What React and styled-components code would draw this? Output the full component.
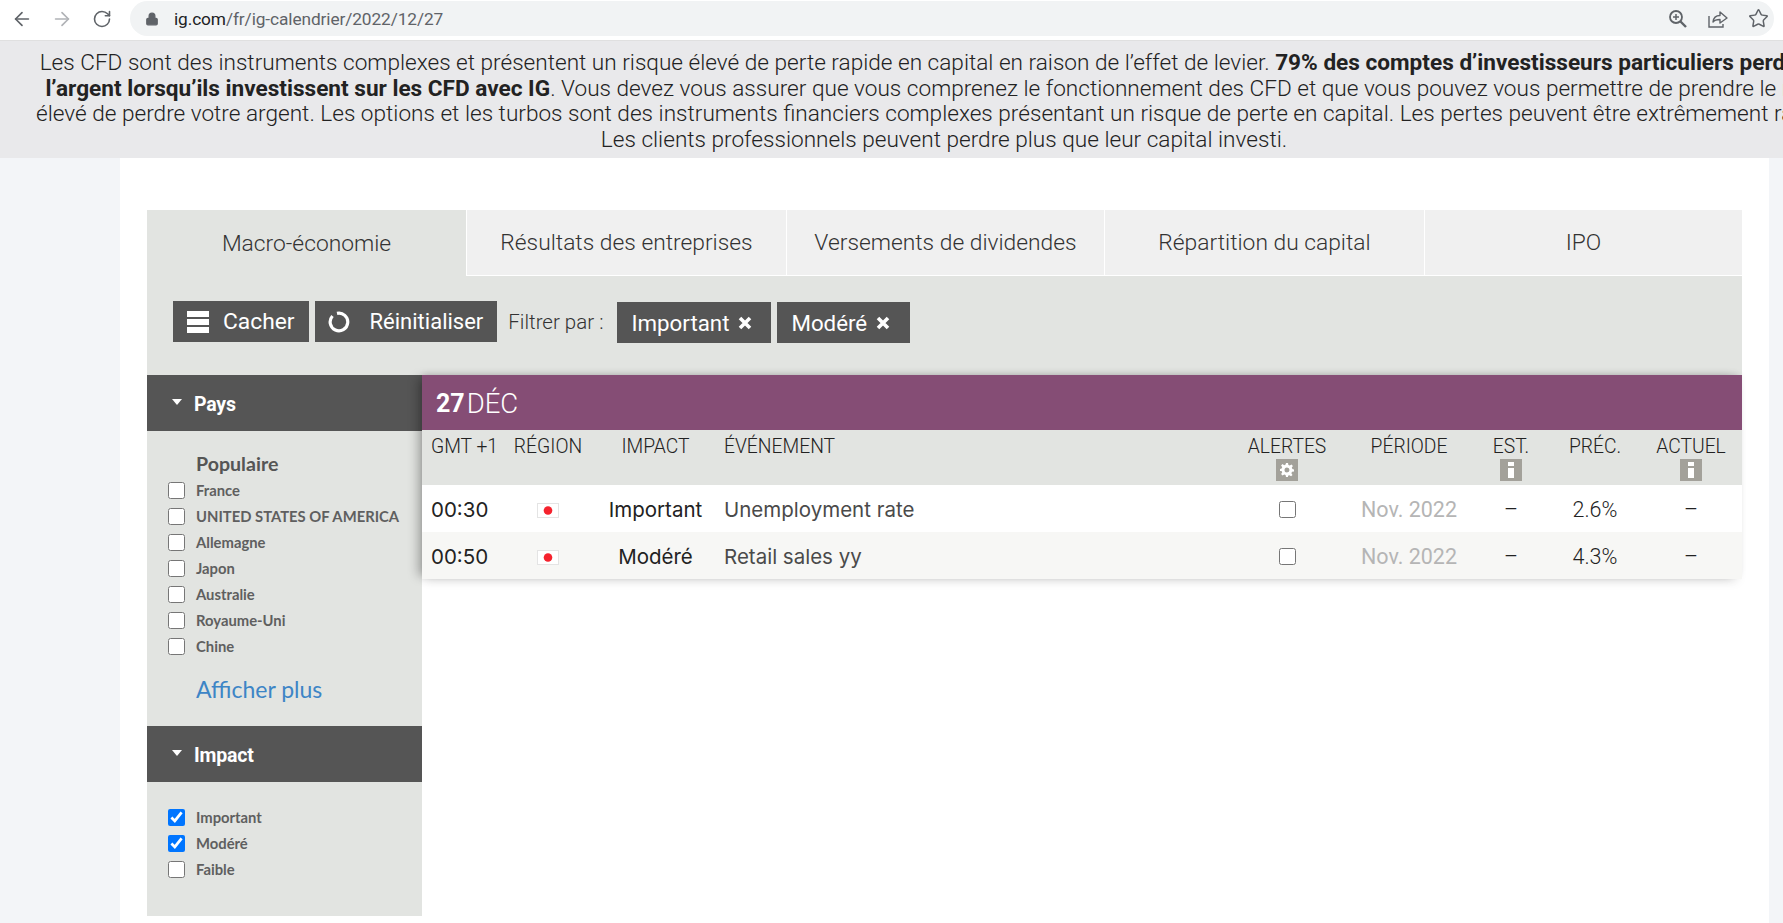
import React from "react";
import styled, { createGlobalStyle } from "styled-components";
import { ArrowLeft, ArrowRight, RotateCw, Lock, Star } from "lucide-react";

const Global = createGlobalStyle`
  html, body { margin: 0; padding: 0; background: #fff; overflow: hidden; }
  body { width: 1783px; height: 923px; font-family: Roboto, "Liberation Sans", sans-serif; }
  * { box-sizing: border-box; }
`;
const sans = `Roboto, "Liberation Sans", sans-serif`;
const round = `Lato, "Noto Sans", sans-serif`;
const geo = `Inter, "Noto Sans", sans-serif`;

const BrowserBar = styled.header`
  height: 41px; display: flex; align-items: flex-start; padding: 1px 9px 0 2px; background: #fff;
  border-bottom: 1px solid #e0e0e0;
`;
const NavButton = styled.span`
  width: 40px; height: 35px; display: flex; align-items: center; justify-content: center;
  color: ${p => (p.$muted ? "#b0b2b6" : "#5f6368")};
`;
const Omnibox = styled.div`
  flex: 1; margin-left: 8px; height: 35px; border-radius: 18px; background: #f1f3f4;
  display: flex; align-items: center; padding-left: 15px; gap: 15px;
`;
const Url = styled.div`
  flex: 1; font-size: 17.3px; color: #5f6368; letter-spacing: -0.1px;
  b { font-weight: 400; color: #202124; }
`;
const OmniActions = styled.div`display: flex; gap: 8px;`;
const OmniIcon = styled.span`
  width: 32px; height: 35px; display: flex; align-items: center; justify-content: center; color: #5f6368;
`;

const Banner = styled.section`
  height: 117px; background: #e9e9eb; overflow: hidden; padding-top: 9px;
`;
const BannerText = styled.p`
  margin: 0; width: 1888px; text-align: center; white-space: nowrap; font-family: ${sans};
  font-size: 22.6px; line-height: 25.67px; font-weight: 300; color: #222;
  b { font-weight: 700; }
`;

const Page = styled.div`display: flex; height: 765px; background: #f3f5f8;`;
const Content = styled.main`
  margin-left: 120px; width: 1649px; background: #fff; padding: 52px 27px 0;
`;
const Tabs = styled.nav`display: grid; grid-template-columns: 319px 320px 318px 320px 318px; height: 66px; background: #e2e4e1;`;
const Tab = styled.div`
  display: flex; align-items: center; justify-content: center; font-size: 22.8px; font-weight: 300; color: #333;
  background: ${p => (p.$active ? "#e2e4e1" : "#f0f0f0")};
  border-left: ${p => (p.$active ? "none" : "1px solid #fff")};
  border-bottom: ${p => (p.$active ? "none" : "1px solid #fff")};
`;
const Toolbar = styled.div`
  height: 99px; background: #e2e4e1; display: flex; align-items: flex-start; padding: 25px 0 0 26px; gap: 6px;
`;
const DarkButton = styled.div`
  height: 41px; display: flex; align-items: center; background: #555; color: #fff; flex: none;
  padding: 0 ${p => p.$pr || 14}px 0 ${p => p.$pl || 14}px; gap: ${p => p.$gap || 13}px;
  font-size: ${p => p.$size || 22.8}px; font-weight: 400; margin-top: ${p => (p.$chip ? 1 : 0)}px;
`;
const FilterLabel = styled.span`
  font-size: 20.5px; font-weight: 300; color: #333; margin: 0 8px 0 5px; line-height: 43px;
`;
const Body = styled.div`display: flex; align-items: flex-start;`;
const Sidebar = styled.aside`width: 275px; background: #e2e4e1; flex: none;`;
const SectionHead = styled.div`
  height: 56px; background: #555; display: flex; align-items: center; padding: 3px 0 0 25px; gap: 12px;
  color: #fff; font-family: ${sans}; font-weight: 700; font-size: 19.5px; letter-spacing: -0.2px;
`;
const Caret = styled.i`
  width: 0; height: 0; border-left: 5.5px solid transparent; border-right: 5.5px solid transparent;
  border-top: 6px solid #fff; margin-top: -5px;
`;
const SectionBody = styled.div`padding: ${p => p.$pt}px 0 ${p => p.$pb}px 21px;`;
const GroupTitle = styled.div`
  height: 26px; line-height: 26px; padding-left: 28px; font-family: ${round}; font-weight: 700; font-size: 19.6px; color: #555;
`;
const CheckRow = styled.label`
  height: 26px; display: flex; align-items: center; gap: 11px;
  font-family: ${round}; font-size: 14.8px; font-weight: 700; color: #5f5f5f;
`;
const Box = styled.input`width: 17px; height: 17px; margin: 0; flex: none;`;
const More = styled.a`
  display: block; margin-top: 17px; padding-left: 28px; font-family: ${round}; font-size: 23px; line-height: 26px; color: #3d85c6;
`;
const Main = styled.section`
  flex: 1;
  box-shadow: -7px 0 10px -3px rgba(0,0,0,.28), 0 7px 10px -4px rgba(0,0,0,.07), 0 -3px 6px -2px rgba(0,0,0,.12);
`;
const DateBar = styled.div`
  height: 55px; background: #854d75; color: #fff; display: flex; align-items: center; padding: 1px 0 0 14px;
  font-size: 27.5px; font-weight: 300; gap: 2px;
  b { font-weight: 700; font-size: 25px; }
`;
const grid = `display: grid; grid-template-columns: 83px 86px 129px 1fr 100px 144px 60px 108px 84px; padding-right: 9px;`;
const HeadRow = styled.div`
  ${grid}; height: 55px; background: #e2e4e1; padding-top: 7px; font-size: 19.3px; font-weight: 300; color: #222; line-height: 20px;
`;
const HeadCell = styled.div`
  display: flex; flex-direction: column; white-space: nowrap;
  align-items: ${p => (p.$pad ? "flex-start" : "center")};
  padding-left: ${p => p.$pad || 0}px;
`;
const Badge = styled.span`
  width: 22px; height: 22px; margin-top: 2px; background: #a3a19a; color: #fff; display: flex; align-items: center; justify-content: center;
`;
const Row = styled.div`
  ${grid}; height: 47px; padding-top: 1px; align-items: center; background: ${p => (p.$alt ? "#f7f7f5" : "#fff")};
  font-family: ${geo}; font-size: 20.5px; font-weight: 400; color: #222;
`;
const Cell = styled.div`
  display: flex; justify-content: ${p => (p.$pad ? "flex-start" : "center")}; padding-left: ${p => p.$pad || 0}px;
  color: ${p => p.$color || "inherit"};
`;
const FlagCell = styled(Cell)`padding-top: 3px;`;
const NarrowCell = styled(Cell)`
  font-family: ${sans}; font-size: 21.5px; font-weight: ${p => p.$wt || 300};
`;

const Flag = () => (
  <svg width="22" height="15" viewBox="0 0 22 15" aria-hidden="true">
    <rect width="22" height="15" fill="#f4f4f4" />
    <rect x=".5" y=".5" width="21" height="14" fill="#fff" stroke="#e4e4e4" />
    <circle cx="11" cy="7.500" r="4.300" fill="#f5222d" />
  </svg>
);
const Bars = () => (
  <svg width="22" height="22" viewBox="0 0 22 22" aria-hidden="true">
    <path d="M0 0h22v6H0zM0 8h22v6H0zM0 16h22v6H0z" fill="#fff" />
  </svg>
);
const Spin = () => (
  <svg width="22" height="22" viewBox="0 0 22 22" aria-hidden="true" fill="none">
    <path d="M4.500 5A8.800 8.800 0 1 0 9 2.400" stroke="#fff" strokeWidth="3.200" />
  </svg>
);
const Cross = () => (
  <svg width="14" height="14" viewBox="0 0 14 14" aria-hidden="true">
    <path d="M2 2l10 10M12 2L2 12" stroke="#fff" strokeWidth="3.600" />
  </svg>
);
const Magnifier = () => (
  <svg width="20" height="20" viewBox="0 0 20 20" fill="none" stroke="#5f6368" strokeWidth="1.800" aria-hidden="true">
    <circle cx="8" cy="8" r="6" />
    <path d="M12.500 12.500L18 18" strokeWidth="2.400" />
    <path d="M8 5v6M5 8h6" strokeWidth="1.500" />
  </svg>
);
const Share = () => (
  <svg width="20" height="20" viewBox="0 0 20 20" fill="none" stroke="#5f6368" strokeWidth="1.400" aria-hidden="true">
    <path d="M1 7v11h14v-3" />
    <path d="M5 13c.5-4.500 3.500-6.500 7-6.500V3l7 6-7 5v-3.500c-3 0-5.500.5-7 2.500z" strokeLinejoin="round" />
  </svg>
);
const Gear = () => (
  <svg width="14" height="14" viewBox="0 0 14 14" aria-hidden="true">
    <path fill="#fff" fillRule="evenodd" d="M6 0h2l.4 2 1.400.6L11.500 1.500 12.900 3l-1.100 1.600.6 1.400 1.600.4v2l-2 .4-.6 1.400 1.100 1.700-1.400 1.400-1.700-1.100-1.400.6L8 14H6l-.4-2-1.400-.6-1.700 1.100L1.100 11l1.100-1.600-.6-1.400L0 8V6l1.600-.4.600-1.400L1.100 2.500 2.500 1.100l1.700 1.100 1.400-.6zM7 4.500a2.500 2.500 0 1 0 0 5 2.500 2.500 0 0 0 0-5z" />
  </svg>
);
const Info = () => (
  <svg width="8" height="16" viewBox="0 0 8 16" aria-hidden="true">
    <path fill="#fff" d="M1 0h6v4H1zM1 6h6v10H1z" />
  </svg>
);

const pays = ["France", "UNITED STATES OF AMERICA", "Allemagne", "Japon", "Australie", "Royaume-Uni", "Chine"];
const rows = [
  { t: "00:30", i: "Important", e: "Unemployment rate", p: "Nov. 2022", v: "2.6%" },
  { t: "00:50", i: "Modéré", e: "Retail sales yy", p: "Nov. 2022", v: "4.3%" },
];

export default function App() {
  return (
    <>
      <Global />
      <BrowserBar>
        <NavButton><ArrowLeft size={22} strokeWidth={1.8} /></NavButton>
        <NavButton $muted><ArrowRight size={22} strokeWidth={1.8} /></NavButton>
        <NavButton><RotateCw size={20} strokeWidth={1.9} /></NavButton>
        <Omnibox>
          <Lock size={14} fill="#5f6368" color="#5f6368" />
          <Url><b>ig.com</b>/fr/ig-calendrier/2022/12/27</Url>
          <OmniActions>
            <OmniIcon><Magnifier /></OmniIcon>
            <OmniIcon><Share /></OmniIcon>
            <OmniIcon><Star size={21} strokeWidth={1.7} /></OmniIcon>
          </OmniActions>
        </Omnibox>
      </BrowserBar>
      <Banner>
        <BannerText>
          Les CFD sont des instruments complexes et présentent un risque élevé de perte rapide en capital en raison de l’effet de levier. <b>79% des comptes d’investisseurs particuliers perdent de</b><br />
          <b>l’argent lorsqu’ils investissent sur les CFD avec IG</b>. Vous devez vous assurer que vous comprenez le fonctionnement des CFD et que vous pouvez vous permettre de prendre le risque<br />
          élevé de perdre votre argent. Les options et les turbos sont des instruments financiers complexes présentant un risque de perte en capital. Les pertes peuvent être extrêmement rapides.<br />
          Les clients professionnels peuvent perdre plus que leur capital investi.
        </BannerText>
      </Banner>
      <Page>
        <Content>
          <Tabs>
            <Tab $active>Macro-économie</Tab>
            <Tab>Résultats des entreprises</Tab>
            <Tab>Versements de dividendes</Tab>
            <Tab>Répartition du capital</Tab>
            <Tab>IPO</Tab>
          </Tabs>
          <Toolbar>
            <DarkButton $gap={14}><Bars />Cacher</DarkButton>
            <DarkButton $gap={20} $pl={13} $size={22}><Spin />Réinitialiser</DarkButton>
            <FilterLabel>Filtrer par :</FilterLabel>
            <DarkButton $chip $gap={9} $pr={19} $size={22.3}>Important<Cross /></DarkButton>
            <DarkButton $chip $gap={9} $pr={20} $size={22.3}>Modéré<Cross /></DarkButton>
          </Toolbar>
          <Body>
            <Sidebar>
              <SectionHead><Caret />Pays</SectionHead>
              <SectionBody $pt={20} $pb={24}>
                <GroupTitle>Populaire</GroupTitle>
                {pays.map(p => <CheckRow key={p}><Box type="checkbox" />{p}</CheckRow>)}
                <More>Afficher plus</More>
              </SectionBody>
              <SectionHead><Caret />Impact</SectionHead>
              <SectionBody $pt={22} $pb={34}>
                <CheckRow><Box type="checkbox" defaultChecked />Important</CheckRow>
                <CheckRow><Box type="checkbox" defaultChecked />Modéré</CheckRow>
                <CheckRow><Box type="checkbox" />Faible</CheckRow>
              </SectionBody>
            </Sidebar>
            <Main>
              <DateBar><b>27</b>DÉC</DateBar>
              <HeadRow>
                <HeadCell $pad={9}>GMT +1</HeadCell>
                <HeadCell>RÉGION</HeadCell>
                <HeadCell>IMPACT</HeadCell>
                <HeadCell $pad={4}>ÉVÉNEMENT</HeadCell>
                <HeadCell>ALERTES<Badge><Gear /></Badge></HeadCell>
                <HeadCell>PÉRIODE</HeadCell>
                <HeadCell>EST.<Badge><Info /></Badge></HeadCell>
                <HeadCell>PRÉC.</HeadCell>
                <HeadCell>ACTUEL<Badge><Info /></Badge></HeadCell>
              </HeadRow>
              {rows.map((r, i) => (
                <Row key={r.t} $alt={i === 1}>
                  <Cell $pad={9}>{r.t}</Cell>
                  <FlagCell><Flag /></FlagCell>
                  <Cell>{r.i}</Cell>
                  <Cell $pad={4} $color="#4a4a4a">{r.e}</Cell>
                  <Cell><Box type="checkbox" /></Cell>
                  <NarrowCell $wt={400} $color="#b5b5b5">{r.p}</NarrowCell>
                  <NarrowCell>–</NarrowCell>
                  <NarrowCell>{r.v}</NarrowCell>
                  <NarrowCell>–</NarrowCell>
                </Row>
              ))}
            </Main>
          </Body>
        </Content>
      </Page>
    </>
  );
}
